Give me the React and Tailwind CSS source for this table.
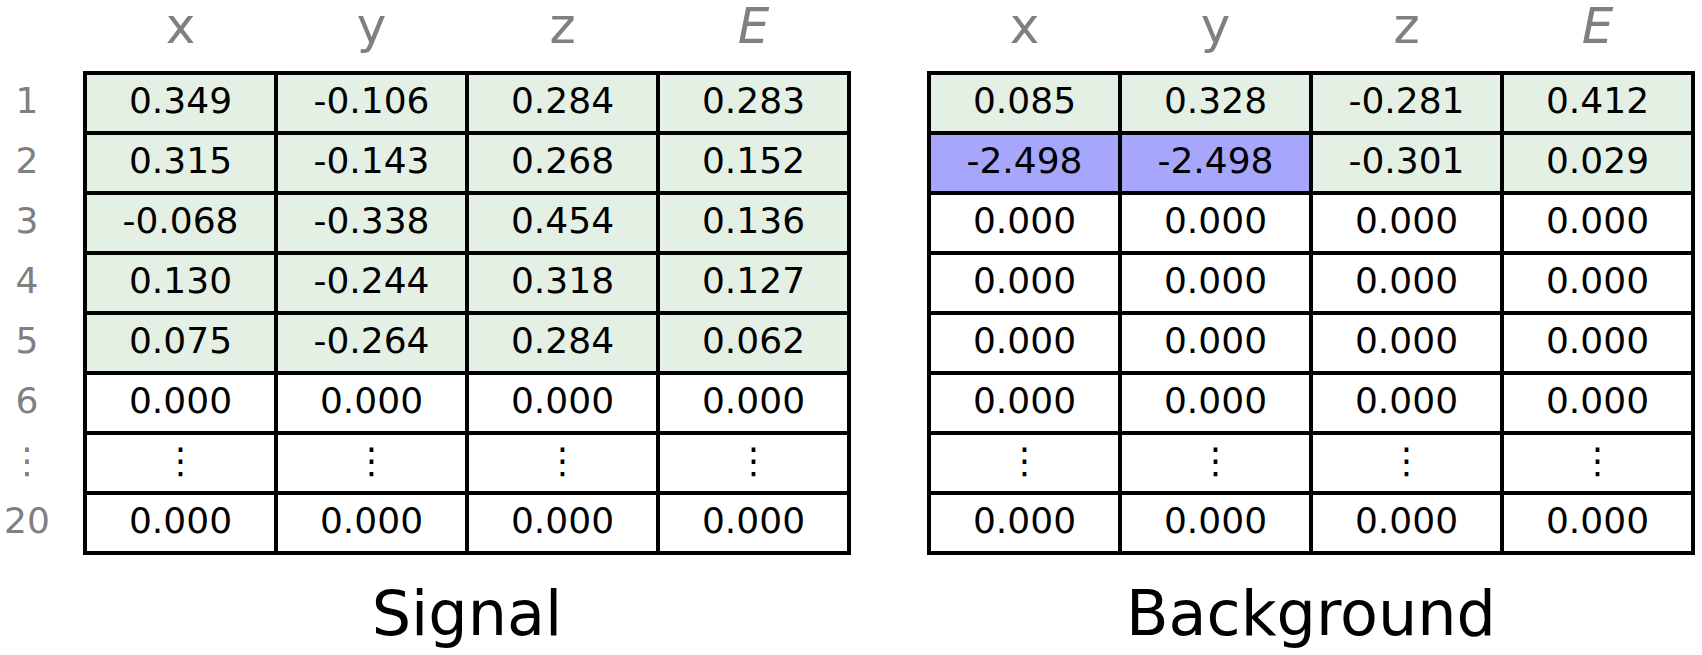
import React from 'react';

const G = 'bg-[#e4f0e4]';
const B = 'bg-[#a6a6fb]';
const W = 'bg-white';

const signal = [
  [['0.349', G], ['-0.106', G], ['0.284', G], ['0.283', G]],
  [['0.315', G], ['-0.143', G], ['0.268', G], ['0.152', G]],
  [['-0.068', G], ['-0.338', G], ['0.454', G], ['0.136', G]],
  [['0.130', G], ['-0.244', G], ['0.318', G], ['0.127', G]],
  [['0.075', G], ['-0.264', G], ['0.284', G], ['0.062', G]],
  [['0.000', W], ['0.000', W], ['0.000', W], ['0.000', W]],
  [['⋮', W], ['⋮', W], ['⋮', W], ['⋮', W]],
  [['0.000', W], ['0.000', W], ['0.000', W], ['0.000', W]],
];

const background = [
  [['0.085', G], ['0.328', G], ['-0.281', G], ['0.412', G]],
  [['-2.498', B], ['-2.498', B], ['-0.301', G], ['0.029', G]],
  [['0.000', W], ['0.000', W], ['0.000', W], ['0.000', W]],
  [['0.000', W], ['0.000', W], ['0.000', W], ['0.000', W]],
  [['0.000', W], ['0.000', W], ['0.000', W], ['0.000', W]],
  [['0.000', W], ['0.000', W], ['0.000', W], ['0.000', W]],
  [['⋮', W], ['⋮', W], ['⋮', W], ['⋮', W]],
  [['0.000', W], ['0.000', W], ['0.000', W], ['0.000', W]],
];

const labels = ['1', '2', '3', '4', '5', '6', '⋮', '20'];

function Headers() {
  return (
    <div className="grid grid-cols-[repeat(4,187px)] gap-x-[4px] px-[4px] h-[71px] pt-[1px] text-[50px] leading-none text-[#808080] text-center">
      <span>x</span>
      <span>y</span>
      <span>z</span>
      <span className="italic">E</span>
    </div>
  );
}

function Table({ rows, title }) {
  return (
    <div className="flex flex-col">
      <Headers />
      <div className="grid grid-cols-[repeat(4,187px)] auto-rows-[56px] gap-[4px] p-[4px] bg-black">
        {rows.flat().map(([v, bg], i) => (
          <div key={i} className={`${bg} flex items-center justify-center pb-[4px] text-[36px] leading-[52px] text-black`}>
            {v}
          </div>
        ))}
      </div>
      <div className="mt-[28px] text-center text-[62px] leading-none text-black">{title}</div>
    </div>
  );
}

export default function App() {
  return (
    <div className="w-[1702px] h-[655px] bg-white flex font-['DejaVu_Sans',sans-serif]">
      <div className="flex flex-col w-[54px] mr-[29px] pt-[71px]">
        <div className="grid auto-rows-[56px] gap-[4px] py-[4px] text-[36px] text-[#808080] text-center">
          {labels.map((l) => (
            <span key={l} className="flex items-center justify-center pb-[4px] leading-[52px]">
              {l}
            </span>
          ))}
        </div>
      </div>
      <Table rows={signal} title="Signal" />
      <div className="w-[76px]" />
      <Table rows={background} title="Background" />
    </div>
  );
}
